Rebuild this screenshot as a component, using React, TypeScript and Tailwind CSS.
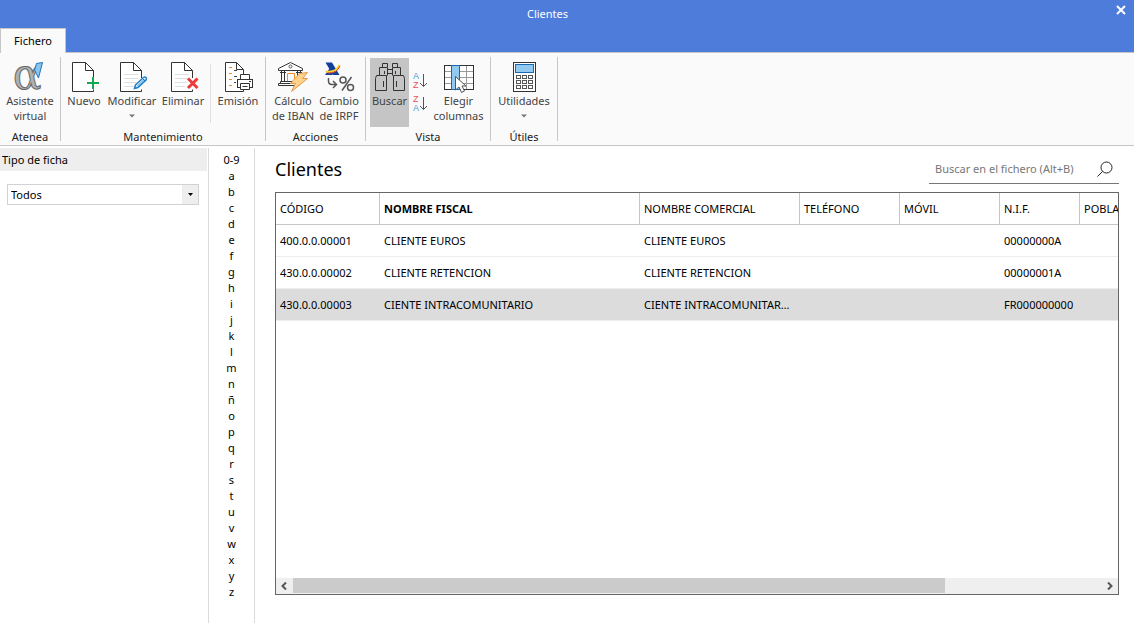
import type { ReactNode } from "react";

const LETTERS = ["0-9", ..."abcdefghijklmnñopqrstuvwxyz"];

const CLIENTS = [
  { code: "400.0.0.00001", name: "CLIENTE EUROS", nif: "00000000A" },
  { code: "430.0.0.00002", name: "CLIENTE RETENCION", nif: "00000001A" },
  { code: "430.0.0.00003", name: "CIENTE INTRACOMUNITARIO", nif: "FR000000000", selected: true },
];

const COLUMNS = [
  { label: "CÓDIGO", width: "w-[104px]" },
  { label: "NOMBRE FISCAL", width: "w-[260px]", sorted: true },
  { label: "NOMBRE COMERCIAL", width: "w-[160px]" },
  { label: "TELÉFONO", width: "w-[100px]" },
  { label: "MÓVIL", width: "w-[100px]" },
  { label: "N.I.F.", width: "w-[80px]" },
  { label: "POBLACIÓN", width: "w-[240px]" },
];

function Icon({ children }: { children: ReactNode }) {
  return (
    <svg
      width="32"
      height="32"
      viewBox="0 0 32 32"
      fill="none"
      className="shrink-0 overflow-visible"
      aria-hidden
    >
      {children}
    </svg>
  );
}

function Sheet({ lines = false }: { lines?: boolean }) {
  return (
    <>
      <path d="M25.5 17V9.5L17.5 1.5H4.5V30.5H25.5V28.5" fill="#fff" stroke="#333" />
      <path d="M17.5 1.5V9.5H25.5" stroke="#333" />
      {lines && <path d="M8 13.5H22M8 17.5H22M8 21.5H20M8 25.5H18" stroke="#dedede" />}
    </>
  );
}

function AssistantIcon() {
  return (
    <Icon>
      <text
        x="-1"
        y="28"
        fontSize="42"
        fill="#b1b1b1"
        stroke="#6a6a6a"
        className="font-['DejaVu_Serif',serif]"
      >
        α
      </text>
      <path d="M22.5 2.5L28.5 1.5L24.5 17L20.5 9Z" fill="#86c5f0" stroke="#2474b5" />
    </Icon>
  );
}

function NewIcon() {
  return (
    <Icon>
      <Sheet />
      <path d="M25 16V28M19 22H31" stroke="#12a84f" strokeWidth="2" />
    </Icon>
  );
}

function EditIcon() {
  return (
    <Icon>
      <Sheet lines />
      <path
        d="M18.5 27.5L19.5 24L27.5 16.5Q29 15.5 30 16.5Q31 17.5 30 19L22 26.5Z"
        fill="#fff"
        stroke="#1c7fc9"
        strokeWidth="1.5"
      />
      <path d="M21 25.5L28.5 18M26.5 17.5L29 20" stroke="#1c7fc9" />
    </Icon>
  );
}

function DeleteIcon() {
  return (
    <Icon>
      <Sheet lines />
      <path d="M21 17.5L30.5 27M30.5 17.5L21 27" stroke="#ee3a3a" strokeWidth="3" />
    </Icon>
  );
}

function PrintIcon() {
  return (
    <Icon>
      <path d="M21.5 13V8.5L14.5 1.5H3.5V30.5H21.5V29" fill="#fff" stroke="#333" />
      <path d="M14.5 1.5V8.5H21.5" stroke="#333" />
      <path d="M7 6.5H10M7 12.5H10M7 18.5H10M7 24.5H10" stroke="#f18a1f" />
      <path d="M12 9.5H15M12 15.5H15M12 21.5H14" stroke="#444" />
      <path d="M18.5 18.5V13.5H27.5V18.5" fill="#fff" stroke="#333" />
      <rect x="15.5" y="18.5" width="15" height="8" fill="#fff" stroke="#333" />
      <path d="M18.5 22.5H27.5V28.5H18.5Z" fill="#fff" stroke="#333" />
      <path d="M27 20.5H29M20.5 25.5H25.5" stroke="#333" />
    </Icon>
  );
}

function BankIcon() {
  return (
    <Icon>
      <path d="M1.5 7.5L13.5 1.5L25.5 7.5V9.5H1.5Z" fill="#fff" stroke="#333" />
      <circle cx="13.5" cy="5.5" r="1.5" stroke="#555" />
      <path d="M4.5 10V20M7.5 10V20M20.5 10V20M23.5 10V20M3 11.5H9M19 11.5H25" stroke="#333" />
      <path d="M10.5 20.5V12.5H17.5V20.5" stroke="#f18a1f" />
      <path d="M3.5 20.5H22V24.5H1.5V22.5H3.5Z" fill="#fff" stroke="#333" />
      <path d="M3.5 22.5H19" stroke="#333" />
      <path
        d="M22.5 12.5L30.5 11.5L25.5 17.5H30.5L14.5 30.5L18.5 22.5H13.5Z"
        fill="#ffd28a"
        stroke="#e79a4f"
      />
    </Icon>
  );
}

function TaxIcon() {
  return (
    <Icon>
      <path d="M2.5 1.5H9L16.5 14H10Z" fill="#123f9c" />
      <path d="M2 14L6.5 7.5L10 13L9 14Z" fill="#123f9c" />
      <path d="M2.5 10.5Q13 12.5 16.5 4" stroke="#f9cf2f" strokeWidth="2" />
      <path d="M5 12Q14 12.5 17 5" stroke="#e3402f" />
      <path
        d="M5.5 17V20Q5.5 23.5 9 23.5H13M10 20L13.5 23.5L10 27"
        stroke="#555"
        strokeWidth="1.5"
      />
      <circle cx="20" cy="19" r="3" stroke="#555" strokeWidth="1.5" />
      <circle cx="27.5" cy="26.5" r="3" stroke="#555" strokeWidth="1.5" />
      <path d="M28.5 16L19 29.5" stroke="#555" strokeWidth="1.5" />
    </Icon>
  );
}

function BinocularsIcon() {
  return (
    <Icon>
      <path d="M8.5 6V2.5H13.5V6M18.5 6V2.5H23.5V6" stroke="#333" />
      <path d="M5.5 14V6.5H13.5V14.5M18.5 14.5V6.5H26.5V14" stroke="#333" />
      <path d="M13.5 8.5H18.5M13.5 12.5H18.5M10.5 10V13M21.5 10V13" stroke="#333" />
      <path d="M2.5 14.5H12.5V29.5H1.5V17.5ZM29.5 14.5H19.5V29.5H30.5V17.5Z" stroke="#333" />
      <path d="M9.5 20V26M22.5 20V26" stroke="#333" />
    </Icon>
  );
}

function ColumnsIcon() {
  return (
    <Icon>
      <rect x="1.5" y="4.5" width="29" height="24" fill="#fff" stroke="#333" />
      <path d="M2 10.5H30M2 16.5H30M2 22.5H30M23.5 5V28" stroke="#999" />
      <rect x="8.5" y="4.5" width="8" height="24" fill="#91c9f0" stroke="#1769b3" />
      <path d="M12.5 15.5V29L16 26L18.5 31.5L21.5 30L19 25H23Z" fill="#fff" stroke="#555" />
    </Icon>
  );
}

function CalculatorIcon() {
  return (
    <Icon>
      <rect x="5.5" y="1.5" width="22" height="29" fill="#fff" stroke="#333" />
      <rect x="7.5" y="3.5" width="18" height="8" fill="#91c9f0" stroke="#1769b3" />
      {[14.5, 19.5, 24.5].map((y) =>
        [8.5, 14.5, 20.5].map((x) => (
          <rect key={`${x}-${y}`} x={x} y={y} width="4" height="3" stroke="#555" />
        )),
      )}
    </Icon>
  );
}

function SortIcon({ descending = false }: { descending?: boolean }) {
  const letters = "font-['Liberation_Sans',sans-serif]";
  return (
    <svg
      width="16"
      height="17"
      viewBox="0 0 16 17"
      fill="none"
      className="overflow-visible"
      aria-hidden
    >
      <text x="1" y="7" fontSize="9" fill={descending ? "#e8505b" : "#3f9bdc"} className={letters}>
        {descending ? "Z" : "A"}
      </text>
      <text x="1" y="16" fontSize="9" fill={descending ? "#3f9bdc" : "#e8505b"} className={letters}>
        {descending ? "A" : "Z"}
      </text>
      <path d="M11.5 2V14.5M8 11L11.5 14.5L15 11" stroke="#555" />
    </svg>
  );
}

function Caret() {
  return (
    <svg width="6" height="4" viewBox="0 0 6 4" className="mt-1.5" aria-hidden>
      <path d="M0 0.5H6L3 3.5Z" fill="#777" />
    </svg>
  );
}

interface RibbonButtonProps {
  icon: ReactNode;
  label: string;
  secondLine?: string;
  width: string;
  menu?: boolean;
  active?: boolean;
}

function RibbonButton({ icon, label, secondLine, width, menu, active }: RibbonButtonProps) {
  return (
    <button
      type="button"
      aria-pressed={active}
      className={`flex h-[69px] shrink-0 flex-col items-center pt-[3px] whitespace-nowrap text-[#444] ${width} ${
        active ? "bg-[#c5c5c5]" : "hover:bg-gray-200"
      }`}
    >
      {icon}
      <span className="leading-[15px]">{label}</span>
      {secondLine && <span className="leading-[15px]">{secondLine}</span>}
      {menu && <Caret />}
    </button>
  );
}

interface RibbonGroupProps {
  title: string;
  width: string;
  inset?: boolean;
  children: ReactNode;
}

function RibbonGroup({ title, width, inset, children }: RibbonGroupProps) {
  return (
    <section
      aria-label={title}
      className={`flex shrink-0 flex-col border-r border-[#c6c6c6] ${width}`}
    >
      <div className={`flex h-[76px] pt-px ${inset ? "pl-1" : ""}`}>{children}</div>
      <p className="text-center leading-[8px] text-[#222]">{title}</p>
    </section>
  );
}

function Ribbon() {
  return (
    <div className="flex h-[93px] shrink-0 border-b border-[#c6c6c6] bg-[#fafafa] pt-1 pb-1">
      <RibbonGroup title="Atenea" width="w-[61px]">
        <RibbonButton icon={<AssistantIcon />} label="Asistente" secondLine="virtual" width="w-[60px]" />
      </RibbonGroup>
      <RibbonGroup title="Mantenimiento" width="w-[205px]">
        <RibbonButton icon={<NewIcon />} label="Nuevo" width="w-[46px]" />
        <RibbonButton icon={<EditIcon />} label="Modificar" width="w-[50px]" menu />
        <RibbonButton icon={<DeleteIcon />} label="Eliminar" width="w-[52px]" />
        <div className="mx-px mt-1.5 h-[59px] w-px bg-[#e0e0e0]" />
        <RibbonButton icon={<PrintIcon />} label="Emisión" width="w-[52px]" />
      </RibbonGroup>
      <RibbonGroup title="Acciones" width="w-[100px]" inset>
        <RibbonButton icon={<BankIcon />} label="Cálculo" secondLine="de IBAN" width="w-[46px]" />
        <RibbonButton icon={<TaxIcon />} label="Cambio" secondLine="de IRPF" width="w-[46px]" />
      </RibbonGroup>
      <RibbonGroup title="Vista" width="w-[125px]" inset>
        <RibbonButton icon={<BinocularsIcon />} label="Buscar" width="w-[39px]" active />
        <div className="flex w-[22px] flex-col items-center gap-1.5 pt-3.5">
          <button type="button" aria-label="Orden ascendente">
            <SortIcon />
          </button>
          <button type="button" aria-label="Orden descendente">
            <SortIcon descending />
          </button>
        </div>
        <RibbonButton icon={<ColumnsIcon />} label="Elegir" secondLine="columnas" width="w-[55px]" />
      </RibbonGroup>
      <RibbonGroup title="Útiles" width="w-[67px]">
        <RibbonButton icon={<CalculatorIcon />} label="Utilidades" width="w-[66px]" menu />
      </RibbonGroup>
    </div>
  );
}

function TitleBar() {
  return (
    <header className="flex h-[53px] shrink-0 flex-col justify-between border-b border-[#c6c6c6] bg-[#4d7cdb]">
      <div className="flex h-7 items-center">
        <h1 className="flex-1 text-center text-white">Clientes</h1>
        <div className="flex w-[39px] justify-end pr-2 pb-2">
          <button type="button" aria-label="Cerrar" className="text-white">
            <svg width="10" height="10" viewBox="0 0 10 10" aria-hidden>
              <path d="M1 1L9 9M9 1L1 9" stroke="currentColor" strokeWidth="2" />
            </svg>
          </button>
        </div>
      </div>
      <nav className="-mb-px flex">
        <button
          type="button"
          className="h-[25px] w-[66px] border border-b-0 border-[#c6c6c6] bg-[#fafafa] text-black"
        >
          Fichero
        </button>
      </nav>
    </header>
  );
}

function FilterPanel() {
  return (
    <aside className="w-[209px] shrink-0 border-r border-[#dadada]">
      <label htmlFor="tipo" className="mr-px block h-[23px] bg-[#eee] pl-0.5 leading-[23px]">
        Tipo de ficha
      </label>
      <div className="relative mt-[13px] mr-[9px] ml-[7px]">
        <select
          id="tipo"
          className="block h-[21px] w-full appearance-none border border-[#d2d2d2] bg-white pl-[3px] text-black"
        >
          <option>Todos</option>
        </select>
        <span className="pointer-events-none absolute inset-y-px right-px flex w-4 items-center justify-center bg-[#eee]">
          <svg width="5" height="3" viewBox="0 0 5 3" aria-hidden>
            <path d="M0 0H5L2.5 3Z" fill="#000" />
          </svg>
        </span>
      </div>
    </aside>
  );
}

function LetterIndex() {
  return (
    <nav
      aria-label="Índice"
      className="flex w-[46px] shrink-0 flex-col items-center border-r border-[#dadada] pt-1"
    >
      {LETTERS.map((letter) => (
        <button key={letter} type="button" className="h-4 w-full leading-4">
          {letter}
        </button>
      ))}
    </nav>
  );
}

function ClientTable() {
  return (
    <div className="flex flex-1 flex-col border border-[#666]">
      <div className="min-w-0 flex-1 overflow-hidden">
        <table className="w-[1044px] table-fixed border-separate border-spacing-0 text-left">
          <thead>
            <tr>
              {COLUMNS.map(({ label, width, sorted }) => (
                <th
                  key={label}
                  scope="col"
                  className={`h-8 border-r border-b border-[#c6c6c6] p-0 pl-1 ${width} ${
                    sorted ? "font-bold" : "font-normal"
                  }`}
                >
                  {label}
                </th>
              ))}
            </tr>
          </thead>
          <tbody>
            {CLIENTS.map(({ code, name, nif, selected }) => (
              <tr key={code} aria-selected={selected} className={selected ? "bg-[#dcdcdc]" : "bg-white"}>
                {[code, name, name, "", "", nif, ""].map((value, i) => (
                  <td
                    key={i}
                    className={`h-8 truncate border-b border-[#eee] p-0 pl-1 ${
                      value === name ? "pr-2" : "pr-1"
                    }`}
                  >
                    {value}
                  </td>
                ))}
              </tr>
            ))}
          </tbody>
        </table>
      </div>
      <div className="flex h-4 bg-[#efefef] text-[#555]">
        <button type="button" aria-label="Desplazar a la izquierda" className="flex w-[17px] items-center pl-[5px]">
          <svg width="6" height="8" viewBox="0 0 6 8" fill="none" aria-hidden>
            <path d="M5 0.5L1.5 4L5 7.5" stroke="currentColor" strokeWidth="2" />
          </svg>
        </button>
        <div className="flex-1">
          <div className="h-[15px] w-[80.7%] bg-[#cbcbcb]" />
        </div>
        <button type="button" aria-label="Desplazar a la derecha" className="flex w-[17px] items-center justify-center">
          <svg width="6" height="8" viewBox="0 0 6 8" fill="none" aria-hidden>
            <path d="M1 0.5L4.5 4L1 7.5" stroke="currentColor" strokeWidth="2" />
          </svg>
        </button>
      </div>
    </div>
  );
}

export default function App() {
  return (
    <div className="flex min-h-screen flex-col bg-white font-['Noto_Sans',sans-serif] text-[11px] leading-4 text-black">
      <TitleBar />
      <Ribbon />
      <div className="flex flex-1 pt-0.5">
        <FilterPanel />
        <LetterIndex />
        <main className="flex min-w-0 flex-1 flex-col pr-[15px] pb-7 pl-5">
          <div className="mb-2 flex h-9 items-end justify-between">
            <h2 className="pb-[3px] text-lg leading-6">Clientes</h2>
            <div className="flex h-[29px] w-[190px] items-center border-b border-[#777]">
              <input
                type="search"
                aria-label="Buscar en el fichero"
                placeholder="Buscar en el fichero (Alt+B)"
                className="min-w-0 flex-1 bg-transparent pl-1.5 outline-none placeholder:text-[#777]"
              />
              <button type="button" aria-label="Buscar" className="mr-1.5 ml-1">
                <svg width="16" height="16" viewBox="0 0 16 16" fill="none" stroke="#222" aria-hidden>
                  <circle cx="9.5" cy="6.5" r="5.5" />
                  <path d="M5.5 10.5L0.5 15.5" />
                </svg>
              </button>
            </div>
          </div>
          <ClientTable />
        </main>
      </div>
    </div>
  );
}
